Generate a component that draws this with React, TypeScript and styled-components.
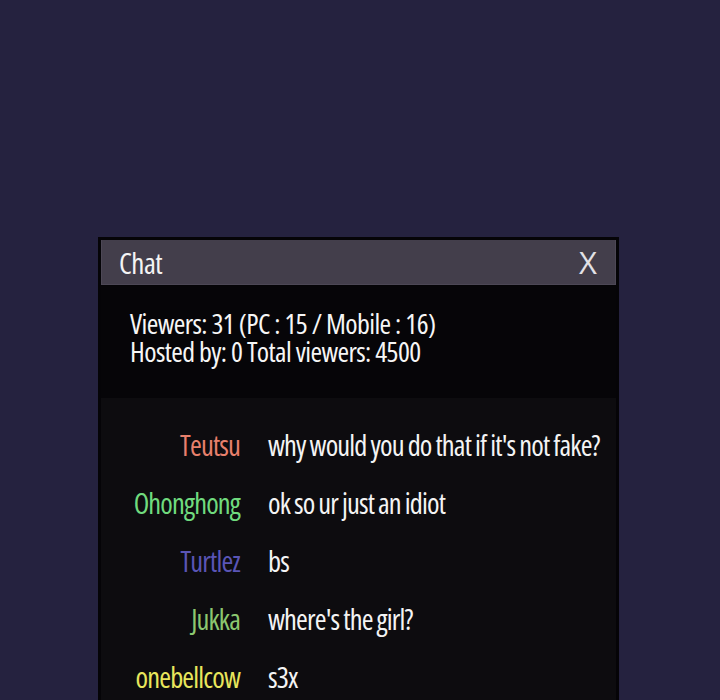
import React from "react";
import styled, { createGlobalStyle } from "styled-components";

const Global = createGlobalStyle`
  html, body {
    margin: 0;
    padding: 0;
    background: #25223f;
  }
  body {
    font-family: "Open Sans", "Noto Sans", sans-serif;
    font-stretch: 75%;
  }
`;

const Page = styled.div`
  width: 720px;
  height: 700px;
  overflow: hidden;
  padding: 237px 0 0 98px;
  box-sizing: border-box;
`;

const Window = styled.section`
  width: 521px;
  border: 3px solid #050407;
  border-bottom: none;
  box-sizing: border-box;
  background: #050407;
  display: flex;
  flex-direction: column;
`;

const TitleBar = styled.header`
  height: 45px;
  background: #433e4b;
  border: 1px solid #4d4856;
  border-top: none;
  box-sizing: border-box;
  display: flex;
  align-items: center;
  justify-content: space-between;
  padding: 0 18px 0 17px;
`;

const Title = styled.h1`
  margin: 0;
  font-size: 29px;
  font-weight: 400;
  line-height: 45px;
  letter-spacing: -0.5px;
  color: #f4f4f4;
`;

const CloseButton = styled.button`
  background: none;
  border: none;
  padding: 0;
  font-family: inherit;
  font-stretch: 100%;
  font-size: 31px;
  font-weight: 400;
  line-height: 45px;
  color: #e2e1e6;
  cursor: pointer;
`;

const Info = styled.div`
  background: #060508;
  padding: 23px 0 33px 29px;
  color: #f6f6f6;
  font-size: 28px;
  line-height: 28px;
  letter-spacing: -0.6px;
  margin-top: 1px;
`;

const Messages = styled.div`
  background: #0d0c0f;
  padding: 18px 0 0 0;
  display: grid;
  grid-template-columns: 139px 1fr;
  column-gap: 28px;
  grid-auto-rows: 58px;
  height: 320px;
`;

const Name = styled.span<{ $color: string }>`
  color: ${(p) => p.$color};
  text-align: right;
  font-size: 28.5px;
  line-height: 58px;
  letter-spacing: -0.85px;
  white-space: nowrap;
`;

const Text = styled.span`
  color: #f4f4f4;
  font-size: 28.5px;
  line-height: 58px;
  letter-spacing: -0.85px;
  word-spacing: -0.5px;
  white-space: nowrap;
`;

const messages = [
  { name: "Teutsu", color: "#e8806c", text: "why would you do that if it's not fake?" },
  { name: "Ohonghong", color: "#70db7e", text: "ok so ur just an idiot" },
  { name: "Turtlez", color: "#5a55b6", text: "bs" },
  { name: "Jukka", color: "#8cc770", text: "where's the girl?" },
  { name: "onebellcow", color: "#e8e65c", text: "s3x" },
];

export default function App() {
  return (
    <Page>
      <Global />
      <Window>
        <TitleBar>
          <Title>Chat</Title>
          <CloseButton>X</CloseButton>
        </TitleBar>
        <Info>
          <div>Viewers: 31 (PC : 15 / Mobile : 16)</div>
          <div>Hosted by: 0 Total viewers: 4500</div>
        </Info>
        <Messages>
          {messages.map((m) => (
            <React.Fragment key={m.name}>
              <Name $color={m.color}>{m.name}</Name>
              <Text>{m.text}</Text>
            </React.Fragment>
          ))}
        </Messages>
      </Window>
    </Page>
  );
}
